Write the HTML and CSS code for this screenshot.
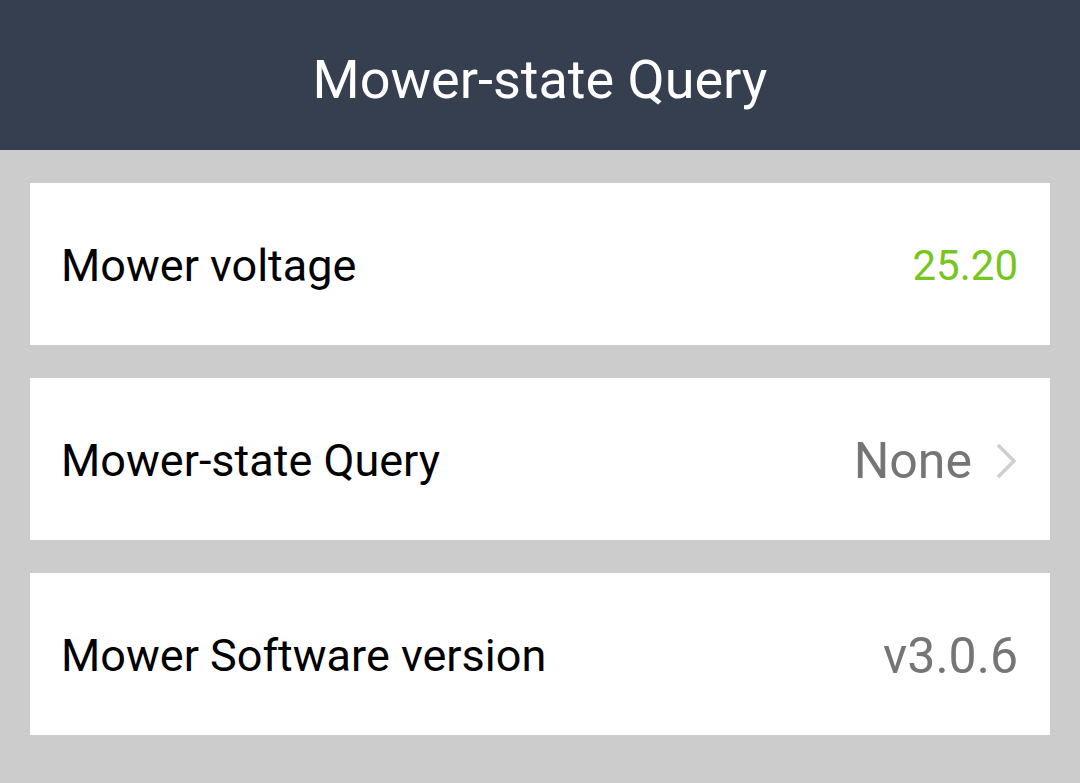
FILE: index.html
```html
<!DOCTYPE html>
<html>
<head>
<meta charset="utf-8">
<link rel="stylesheet" href="styles.css">
</head>
<body>
<header class="top">Mower-state Query</header>
<main class="list">
  <div class="card">
    <span class="label">Mower voltage</span>
    <span class="value green">25.20</span>
  </div>
  <div class="card">
    <span class="label">Mower-state Query</span>
    <span class="right">
      <span class="value">None</span>
      <svg class="chev" width="26" height="40" viewBox="0 0 26 40"><path d="M4 4 L20 20 L4 36" fill="none" stroke="#cfcfcf" stroke-width="3.5"/></svg>
    </span>
  </div>
  <div class="card">
    <span class="label">Mower Software version</span>
    <span class="value">v3.0.6</span>
  </div>
</main>
</body>
</html>
```
FILE: styles.css
```css
html, body {
  margin: 0;
  padding: 0;
  background: #cccccc;
  font-family: Roboto, "Noto Sans", sans-serif;
}
.top {
  height: 150px;
  background: #363f4f;
  color: #ffffff;
  font-size: 54px;
  display: flex;
  align-items: center;
  justify-content: center;
  padding-top: 8px;
  box-sizing: border-box;
}
.list {
  display: flex;
  flex-direction: column;
  gap: 33px;
  padding: 33px 30px 0 30px;
}
.card {
  height: 162px;
  background: #ffffff;
  display: flex;
  align-items: center;
  justify-content: space-between;
  padding: 3px 32px 0 31px;
  box-sizing: border-box;
  font-size: 45px;
}
.label {
  color: #000000;
}
.value {
  color: #757575;
  font-size: 50px;
}
.value.green {
  color: #76c61d;
  font-size: 42px;
}
.right {
  display: flex;
  align-items: center;
  gap: 22px;
}
.chev {
  display: block;
  margin-right: -2px;
}
```
